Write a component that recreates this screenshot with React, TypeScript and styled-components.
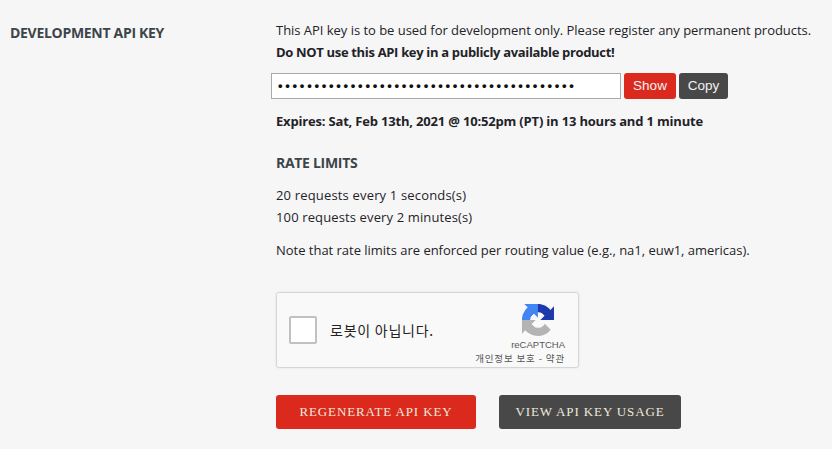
import React from "react";
import styled, { createGlobalStyle } from "styled-components";

const Global = createGlobalStyle`
  html, body { margin: 0; padding: 0; background: #f6f6f6; }
  body { font-family: "Open Sans", "Liberation Sans", sans-serif; color: #1f2328; }
  #root { width: 832px; height: 449px; overflow: hidden; }
`;

const Page = styled.div`
  display: grid;
  grid-template-columns: 276px 1fr;
  height: 449px;
  padding-top: 19px;
  box-sizing: border-box;
`;

const SideLabel = styled.h2`
  margin: 4px 0 0 10px;
  font: 700 14px/20px "Open Sans", sans-serif;
  letter-spacing: -0.3px;
  color: #3c4549;
  text-transform: uppercase;
  white-space: nowrap;
`;

const Content = styled.div`
  display: flex;
  flex-direction: column;
`;

const Text = styled.p<{ $strong?: boolean; $gap?: number; $spacing?: number }>`
  margin: ${(p) => p.$gap ?? 0}px 0 0;
  font-family: "Open Sans", sans-serif;
  font-size: 13px;
  line-height: 22px;
  letter-spacing: ${(p) => p.$spacing ?? 0}px;
  font-weight: ${(p) => (p.$strong ? 700 : 400)};
  color: #1f2328;
  white-space: nowrap;
`;

const KeyRow = styled.div`
  display: flex;
  gap: 3px;
  margin: 10px 0 0 -5px;
  height: 26px;
`;

const KeyField = styled.div`
  width: 350px;
  box-sizing: border-box;
  border: 1px solid #a9a9a9;
  background: #fff;
  padding-left: 6px;
  font: 700 13px/24px "Liberation Sans", sans-serif;
  letter-spacing: 2.73px;
  color: #111;
  overflow: hidden;
  white-space: nowrap;
`;

const SmallButton = styled.button<{ $dark?: boolean }>`
  border: 0;
  padding: 0;
  width: ${(p) => (p.$dark ? 49 : 52)}px;
  border-radius: 3px;
  background: ${(p) => (p.$dark ? "#484848" : "#dc291e")};
  color: #f2f2f2;
  font: 400 13.5px/26px "Liberation Sans", sans-serif;
`;

const SubHeading = styled.h3`
  margin: 21px 0 0;
  font: 700 14px/20px "Open Sans", sans-serif;
  letter-spacing: -0.3px;
  color: #3c4549;
  text-transform: uppercase;
`;

const Captcha = styled.div`
  margin-top: 31px;
  width: 303px;
  height: 76px;
  box-sizing: border-box;
  border: 1px solid #d6d6d6;
  border-radius: 3px;
  background: #f9f9f9;
  box-shadow: 0 0 3px rgba(0, 0, 0, 0.08);
  display: flex;
  align-items: center;
  padding-left: 12px;
`;

const CaptchaBox = styled.div`
  width: 24px;
  height: 24px;
  border: 2px solid #c1c1c1;
  border-radius: 2px;
  background: #fff;
  flex: none;
`;

const CaptchaLabel = styled.span`
  margin-left: 13px;
  font: 400 14px/20px "Noto Sans CJK KR", "Liberation Sans", sans-serif;
  letter-spacing: 0.75px;
  color: #222;
  flex: 1;
  white-space: nowrap;
`;

const CaptchaBrand = styled.div`
  display: flex;
  flex-direction: column;
  align-items: flex-end;
  padding: 11px 13px 0 0;
  align-self: stretch;
`;

const LogoSlot = styled.div`
  display: flex;
  justify-content: center;
  width: 54px;
  height: 32px;
`;

const BrandName = styled.span`
  margin-top: 3px;
  font: 400 9.5px/12px "Liberation Sans", sans-serif;
  color: #555;
`;

const BrandTerms = styled.span`
  margin-top: 1px;
  font: 400 9.5px/13px "Noto Sans CJK KR", sans-serif;
  letter-spacing: 0.85px;
  color: #555;
  white-space: nowrap;
`;

const Actions = styled.div`
  display: flex;
  gap: 23px;
  margin-top: 27px;
`;

const ActionButton = styled.button<{ $dark?: boolean }>`
  border: 0;
  height: 34px;
  width: ${(p) => (p.$dark ? 182 : 200)}px;
  padding: 0;
  border-radius: 3px;
  background: ${(p) => (p.$dark ? "#484848" : "#dc291e")};
  color: #efe9dc;
  font: 400 13px/34px "Liberation Serif", serif;
  letter-spacing: 0.88px;
  text-transform: uppercase;
`;

const Logo = () => (
  <svg width="32" height="32" viewBox="0 0 64 64" aria-hidden="true">
    <path d="M64 31.955l-.033-1.37V4.687l-7.16 7.16C50.948 4.674 42.033.093 32.05.093c-10.4 0-19.622 4.96-25.458 12.64l11.736 11.86a15.55 15.55 0 0 1 4.754-5.334c2.05-1.6 4.952-2.906 8.968-2.906.485 0 .86.057 1.135.163 4.976.393 9.288 3.14 11.828 7.124l-8.307 8.307 26.3-.001" fill="#1c3aa9" />
    <path d="M31.862.001l-1.37.033H4.594l7.16 7.16C4.58 13.052 0 21.967 0 31.95c0 10.4 4.96 19.622 12.64 25.458l11.86-11.736a15.55 15.55 0 0 1-5.334-4.754c-1.6-2.05-2.906-4.952-2.906-8.968 0-.485.057-.86.163-1.135.393-4.976 3.14-9.288 7.124-11.828l8.307 8.307L31.862.001" fill="#4285f4" />
    <path d="M.001 32.139l.033 1.37v25.898l7.16-7.16c5.858 7.173 14.774 11.754 24.757 11.754 10.4 0 19.622-4.96 25.458-12.64L45.673 39.5a15.55 15.55 0 0 1-4.754 5.334c-2.05 1.6-4.952 2.906-8.968 2.906-.485 0-.86-.057-1.135-.163-4.976-.393-9.288-3.14-11.828-7.124l8.307-8.307-26.3.001" fill="#b4b4b4" />
  </svg>
);

export default function App() {
  return (
    <>
      <Global />
      <Page>
        <SideLabel>Development API Key</SideLabel>
        <Content>
          <Text $spacing={-0.03}>This API key is to be used for development only. Please register any permanent products.</Text>
          <Text $strong $spacing={-0.33}>Do NOT use this API key in a publicly available product!</Text>
          <KeyRow>
            <KeyField>{"•".repeat(41)}</KeyField>
            <SmallButton>Show</SmallButton>
            <SmallButton $dark>Copy</SmallButton>
          </KeyRow>
          <Text $strong $gap={11} $spacing={-0.18}>Expires: Sat, Feb 13th, 2021 @ 10:52pm (PT) in 13 hours and 1 minute</Text>
          <SubHeading>Rate Limits</SubHeading>
          <Text $gap={11} $spacing={0.17}>20 requests every 1 seconds(s)</Text>
          <Text $spacing={0.13}>100 requests every 2 minutes(s)</Text>
          <Text $gap={11} $spacing={-0.02}>Note that rate limits are enforced per routing value (e.g., na1, euw1, americas).</Text>
          <Captcha>
            <CaptchaBox />
            <CaptchaLabel>로봇이 아닙니다.</CaptchaLabel>
            <CaptchaBrand>
              <LogoSlot><Logo /></LogoSlot>
              <BrandName>reCAPTCHA</BrandName>
              <BrandTerms>개인정보 보호 - 약관</BrandTerms>
            </CaptchaBrand>
          </Captcha>
          <Actions>
            <ActionButton>Regenerate API Key</ActionButton>
            <ActionButton $dark>View API Key Usage</ActionButton>
          </Actions>
        </Content>
      </Page>
    </>
  );
}
